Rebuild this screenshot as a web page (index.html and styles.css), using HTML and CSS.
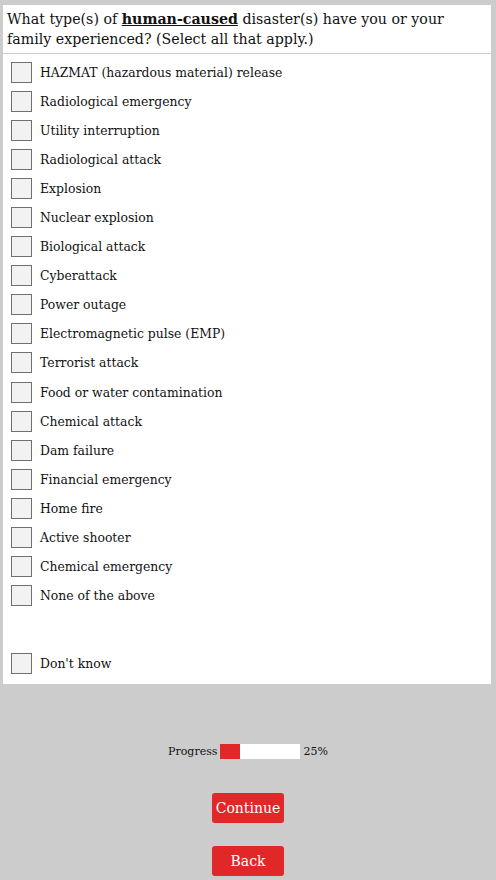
FILE: index.html
```html
<!DOCTYPE html>
<html>
<head>
<meta charset="utf-8">
<link rel="stylesheet" href="styles.css">
</head>
<body>
<div class="panel">
  <div class="question">What type(s) of <span class="em">human-caused</span> disaster(s) have you or your family experienced? (Select all that apply.)</div>
  <ul class="options">
    <li class="opt"><span class="box"></span><span>HAZMAT (hazardous material) release</span></li>
    <li class="opt"><span class="box"></span><span>Radiological emergency</span></li>
    <li class="opt"><span class="box"></span><span>Utility interruption</span></li>
    <li class="opt"><span class="box"></span><span>Radiological attack</span></li>
    <li class="opt"><span class="box"></span><span>Explosion</span></li>
    <li class="opt"><span class="box"></span><span>Nuclear explosion</span></li>
    <li class="opt"><span class="box"></span><span>Biological attack</span></li>
    <li class="opt"><span class="box"></span><span>Cyberattack</span></li>
    <li class="opt"><span class="box"></span><span>Power outage</span></li>
    <li class="opt"><span class="box"></span><span>Electromagnetic pulse (EMP)</span></li>
    <li class="opt"><span class="box"></span><span>Terrorist attack</span></li>
    <li class="opt"><span class="box"></span><span>Food or water contamination</span></li>
    <li class="opt"><span class="box"></span><span>Chemical attack</span></li>
    <li class="opt"><span class="box"></span><span>Dam failure</span></li>
    <li class="opt"><span class="box"></span><span>Financial emergency</span></li>
    <li class="opt"><span class="box"></span><span>Home fire</span></li>
    <li class="opt"><span class="box"></span><span>Active shooter</span></li>
    <li class="opt"><span class="box"></span><span>Chemical emergency</span></li>
    <li class="opt"><span class="box"></span><span>None of the above</span></li>
    <li class="opt opt-sep"><span class="box"></span><span>Don't know</span></li>
  </ul>
</div>
<div class="progress">
  <span>Progress</span>
  <span class="bar"><span class="fill" style="width:25%"></span></span>
  <span>25%</span>
</div>
<div class="actions">
  <button class="btn">Continue</button>
  <button class="btn">Back</button>
</div>
</body>
</html>
```
FILE: styles.css
```css
html, body {
  margin: 0;
  padding: 0;
  background: #cccccc;
}
body {
  font-family: "DejaVu Serif", "Liberation Serif", serif;
  color: #111;
  width: 496px;
  height: 880px;
  overflow: hidden;
}
.panel {
  margin: 5px 5px 0 3px;
  background: #fff;
  padding-bottom: 6px;
}
.question {
  font-size: 14.2px;
  line-height: 20px;
  padding: 4px 4px 4px 4px;
  border-bottom: 1px solid #cccccc;
}
.em {
  font-weight: bold;
  text-decoration: underline;
}
.options {
  list-style: none;
  margin: 0;
  padding: 4px 0 0 8px;
}
.opt {
  display: flex;
  align-items: center;
  gap: 8px;
  height: 29.06px;
  font-size: 12.4px;
}
.opt-sep {
  margin-top: 39px;
}
.box {
  width: 19px;
  height: 19px;
  border: 1px solid #707070;
  background: #f2f2f2;
  flex: none;
}
.progress {
  margin-top: 60px;
  display: flex;
  justify-content: center;
  align-items: center;
  gap: 3px;
  font-size: 11px;
  height: 15px;
}
.bar {
  width: 80px;
  height: 15px;
  background: #fff;
  display: flex;
}
.fill {
  background: #e02828;
  height: 100%;
}
.actions {
  display: flex;
  flex-direction: column;
  align-items: center;
  gap: 23px;
  margin-top: 34px;
}
.btn {
  width: 72px;
  height: 30px;
  background: #e02828;
  color: #fff;
  border: none;
  border-radius: 3px;
  font-family: "DejaVu Serif", "Liberation Serif", serif;
  font-size: 14px;
  padding: 0;
}
```
